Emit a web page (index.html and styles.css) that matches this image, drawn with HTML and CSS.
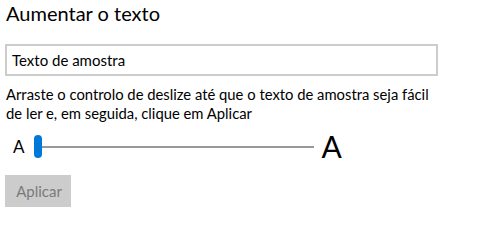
FILE: index.html
```html
<!DOCTYPE html>
<html lang="pt">
<head>
<meta charset="utf-8">
<title>Aumentar o texto</title>
<link rel="stylesheet" href="styles.css">
</head>
<body>
<main class="panel">
  <h1 class="title">Aumentar o texto</h1>
  <div class="sample">Texto de amostra</div>
  <p class="hint">Arraste o controlo de deslize até que o texto de amostra seja fácil de ler e, em seguida, clique em Aplicar</p>
  <div class="slider-row">
    <span class="a-small">A</span>
    <div class="slider">
      <span class="thumb"></span>
      <span class="track"></span>
    </div>
    <span class="a-big">A</span>
  </div>
  <button class="apply" disabled>Aplicar</button>
</main>
</body>
</html>
```

FILE: styles.css
```css
html, body {
  margin: 0;
  padding: 0;
  background: #ffffff;
}
body {
  font-family: Lato, "Noto Sans", sans-serif;
  color: #000000;
}
.panel {
  display: flex;
  flex-direction: column;
  align-items: flex-start;
  padding: 0 0 0 5px;
}
.title {
  margin: 0;
  padding: 1px 0 0 1px;
  font-size: 20px;
  font-weight: 400;
  line-height: 24px;
}
.sample {
  margin-top: 19px;
  box-sizing: border-box;
  width: 433px;
  height: 32px;
  border: 2px solid #cccccc;
  padding: 0 5px;
  font-size: 15px;
  line-height: 28px;
}
.hint {
  margin: 9px 0 0 1px;
  width: 440px;
  font-size: 14.8px;
  line-height: 19px;
}
.slider-row {
  margin-top: 10px;
  display: flex;
  align-items: center;
  height: 27px;
}
.a-small {
  margin-left: 8px;
  font-size: 17px;
  line-height: 20px;
}
.slider {
  margin-left: 9px;
  display: flex;
  align-items: center;
  width: 280px;
}
.thumb {
  width: 8px;
  height: 23px;
  border-radius: 4px;
  background: #0078d7;
}
.track {
  flex: 1;
  height: 2px;
  background: #999999;
}
.a-big {
  margin-left: 8px;
  font-size: 30px;
  line-height: 27px;
}
.apply {
  margin-top: 15px;
  width: 66px;
  height: 32px;
  border: 0;
  background: #cccccc;
  color: #7a7a7a;
  font-family: inherit;
  font-size: 15px;
  padding: 0 0 0 2px;
}
```
